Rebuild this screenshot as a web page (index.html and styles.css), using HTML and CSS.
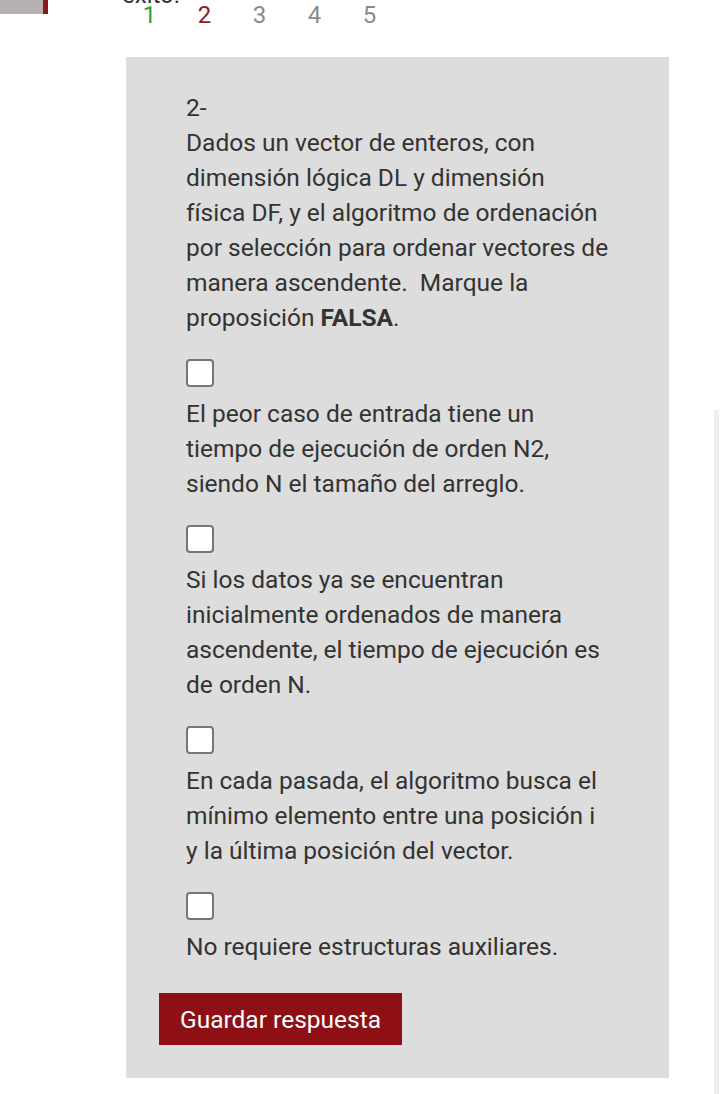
FILE: index.html
```html
<!DOCTYPE html>
<html lang="es">
<head>
<meta charset="utf-8">
<link rel="stylesheet" href="styles.css">
</head>
<body>
<div class="top">
  <div class="tab"></div>
  <div class="nav">
    <div class="exito">éxito.</div>
    <div class="nums">
      <span class="num ok">1</span><span class="num cur">2</span><span class="num">3</span><span class="num">4</span><span class="num">5</span>
    </div>
  </div>
</div>
<div class="panel">
  <div class="question">
    <p class="stem">2-<br>Dados un vector de enteros, con dimensión lógica DL y dimensión física DF, y el algoritmo de ordenación por selección para ordenar vectores de manera ascendente.&nbsp; Marque la proposición <b>FALSA</b>.</p>
    <div class="opt"><span class="box"></span><p>El peor caso de entrada tiene un tiempo de ejecución de orden N2, siendo N el tamaño del arreglo.</p></div>
    <div class="opt"><span class="box"></span><p>Si los datos ya se encuentran inicialmente ordenados de manera ascendente, el tiempo de ejecución es de orden N.</p></div>
    <div class="opt"><span class="box"></span><p>En cada pasada, el algoritmo busca el mínimo elemento entre una posición i y la última posición del vector.</p></div>
    <div class="opt"><span class="box"></span><p>No requiere estructuras auxiliares.</p></div>
  </div>
  <button class="save">Guardar respuesta</button>
</div>
<div class="scrollstrip"></div>
</body>
</html>
```
FILE: styles.css
```css
html, body {
  margin: 0;
  padding: 0;
  background: #ffffff;
}
body {
  font-family: Roboto, "Liberation Sans", sans-serif;
  color: #333333;
  width: 720px;
  height: 1094px;
  overflow: hidden;
  position: relative;
}
.top {
  display: flex;
  align-items: flex-start;
  height: 57px;
}
.tab {
  width: 43px;
  height: 14px;
  background: #b5b1b1;
  border-right: 5px solid #8c1616;
  flex: none;
}
.nav {
  margin-left: 74px;
  margin-top: -15px;
}
.exito {
  font-size: 24px;
  line-height: 20px;
  color: #333;
}
.nums {
  display: flex;
  font-size: 24px;
  line-height: 20px;
}
.num {
  width: 55px;
  text-align: center;
  color: #8a8a8a;
}
.num.ok { color: #1ea64b; }
.num.cur { color: #8e1a1f; }
.panel {
  margin-left: 126px;
  width: 543px;
  box-sizing: border-box;
  background: #dddddd;
  padding: 33px;
}
.question {
  padding-left: 27px;
  padding-right: 27px;
  font-size: 24.5px;
  line-height: 35px;
}
.question p {
  margin: 0;
}
.stem b {
  font-weight: 700;
}
.opt {
  margin-top: 24px;
}
.box {
  display: block;
  width: 28px;
  height: 28px;
  box-sizing: border-box;
  border: 2px solid #767676;
  border-radius: 4px;
  background: #ffffff;
  margin-bottom: 9px;
}
.save {
  margin-top: 29px;
  display: block;
  width: 243px;
  height: 52px;
  border: none;
  background: #8e1014;
  color: #ffffff;
  font-family: Roboto, "Liberation Sans", sans-serif;
  font-size: 24.5px;
  padding: 0;
}
.scrollstrip {
  position: absolute;
  left: 714px;
  top: 410px;
  width: 5px;
  height: 684px;
  background: #efefef;
}
```
